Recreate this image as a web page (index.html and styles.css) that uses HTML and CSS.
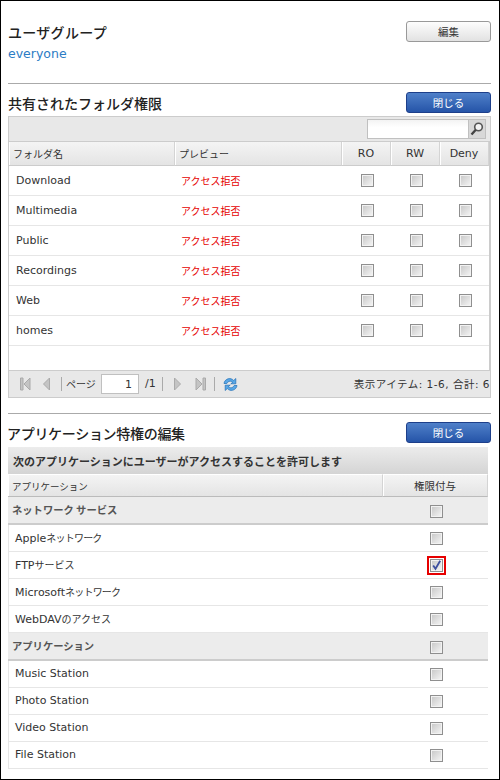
FILE: index.html
```html
<!DOCTYPE html>
<html>
<head>
    <meta charset="utf-8">
    <title>ユーザグループ</title>
    <link rel="stylesheet" href="styles.css">
</head>
<body>
    <div class="frame">
        <!-- ユーザグループ -->
        <div class="group-section">
            <div>
                <div class="section-title user-title">ユーザグループ</div>
                <div class="group-name">everyone</div>
            </div>
            <button class="btn">編集</button>
        </div>

        <!-- フォルダ権限 -->
        <div class="section-head">
            <div class="section-title">共有されたフォルダ権限</div>
            <button class="btn btn-blue">閉じる</button>
        </div>
        <div class="panel">
            <div class="toolbar">
                <div class="search">
                    <input type="text" class="search-input">
                    <span class="search-btn">
                        <svg width="16" height="16" viewBox="0 0 16 16"><circle cx="9.5" cy="6" r="3.8" fill="#f4f4f4" stroke="#555" stroke-width="1.6"/><path d="M6.8 8.8L2.5 13.5" stroke="#444" stroke-width="2.4"/></svg>
                    </span>
                </div>
            </div>
            <div class="table-body">
                <table class="folder-table">
                    <colgroup>
                        <col class="col-name"><col class="col-preview"><col class="col-check"><col class="col-check"><col class="col-check">
                    </colgroup>
                    <tr>
                        <th class="jp">フォルダ名</th>
                        <th class="jp">プレビュー</th>
                        <th class="center">RO</th>
                        <th class="center">RW</th>
                        <th class="center">Deny</th>
                    </tr>
                    <tr>
                        <td class="name">Download</td>
                        <td class="denied">アクセス拒否</td>
                        <td class="center"><span class="check"></span></td>
                        <td class="center"><span class="check"></span></td>
                        <td class="center"><span class="check"></span></td>
                    </tr>
                    <tr>
                        <td class="name">Multimedia</td>
                        <td class="denied">アクセス拒否</td>
                        <td class="center"><span class="check"></span></td>
                        <td class="center"><span class="check"></span></td>
                        <td class="center"><span class="check"></span></td>
                    </tr>
                    <tr>
                        <td class="name">Public</td>
                        <td class="denied">アクセス拒否</td>
                        <td class="center"><span class="check"></span></td>
                        <td class="center"><span class="check"></span></td>
                        <td class="center"><span class="check"></span></td>
                    </tr>
                    <tr>
                        <td class="name">Recordings</td>
                        <td class="denied">アクセス拒否</td>
                        <td class="center"><span class="check"></span></td>
                        <td class="center"><span class="check"></span></td>
                        <td class="center"><span class="check"></span></td>
                    </tr>
                    <tr>
                        <td class="name">Web</td>
                        <td class="denied">アクセス拒否</td>
                        <td class="center"><span class="check"></span></td>
                        <td class="center"><span class="check"></span></td>
                        <td class="center"><span class="check"></span></td>
                    </tr>
                    <tr>
                        <td class="name">homes</td>
                        <td class="denied">アクセス拒否</td>
                        <td class="center"><span class="check"></span></td>
                        <td class="center"><span class="check"></span></td>
                        <td class="center"><span class="check"></span></td>
                    </tr>
                </table>
            </div>
            <div class="pager">
                <svg class="pg-icon first" width="11" height="14" viewBox="0 0 11 14"><path d="M0.5 1h2.5v12H0.5z" fill="#c4c4c4" stroke="#aaa"/><path d="M10 1v12L4 7z" fill="#c4c4c4" stroke="#aaa"/></svg>
                <svg class="pg-icon prev" width="7" height="14" viewBox="0 0 7 14"><path d="M6.5 1v12L0.5 7z" fill="#c4c4c4" stroke="#aaa"/></svg>
                <span class="pg-sep"></span>
                <span class="pg-label">ページ</span>
                <input type="text" class="pg-input" value="1">
                <span class="pg-total">/1</span>
                <span class="pg-sep"></span>
                <svg class="pg-icon next" width="7" height="14" viewBox="0 0 7 14"><path d="M0.5 1v12L6.5 7z" fill="#c4c4c4" stroke="#aaa"/></svg>
                <svg class="pg-icon last" width="11" height="14" viewBox="0 0 11 14"><path d="M1 1v12L7 7z" fill="#c4c4c4" stroke="#aaa"/><path d="M8 1h2.5v12H8z" fill="#c4c4c4" stroke="#aaa"/></svg>
                <span class="pg-sep"></span>
                <svg class="pg-refresh" width="15" height="15" viewBox="0 0 15 15"><path d="M1 6.500C1.500 3 5 1 8 1.800c1.200.3 2 .9 2.700 1.700L12.800 1.500V6.800H7.800L9.700 5.300C8.300 3.700 5.300 3.700 3.800 6.500z" fill="#5aa8e6" stroke="#1f6db5" stroke-width=".7"/><path d="M14 8.500C13.500 12 10 14 7 13.200c-1.200-.3-2-.9-2.700-1.700L2.200 13.500V8.200H7.200L5.300 9.700C6.700 11.300 9.700 11.300 11.200 8.500z" fill="#5aa8e6" stroke="#1f6db5" stroke-width=".7"/></svg>
                <span class="pg-info">表示アイテム: 1-6, 合計: 6</span>
            </div>
        </div>

        <div class="divider"></div>

        <!-- アプリケーション特権 -->
        <div class="section-head app-head">
            <div class="section-title app-title">アプリケーション特権の編集</div>
            <button class="btn btn-blue">閉じる</button>
        </div>
        <table class="app-table">
            <colgroup>
                <col class="col-app"><col class="col-grant">
            </colgroup>
            <tr class="caption-row">
                <td colspan="2">次のアプリケーションにユーザーがアクセスすることを許可します</td>
            </tr>
            <tr>
                <th>アプリケーション</th>
                <th class="center">権限付与</th>
            </tr>
            <tr class="group-row">
                <td>ネットワーク サービス</td>
                <td class="center"><span class="check"></span></td>
            </tr>
            <tr>
                <td>Apple<span class="jp narrow">ネットワーク</span></td>
                <td class="center"><span class="check"></span></td>
            </tr>
            <tr>
                <td>FTP<span class="jp">サービス</span></td>
                <td class="center">
                    <span class="check-mark">
                        <span class="check">
                            <svg width="11" height="11" viewBox="0 0 11 11"><path d="M2.200 5.500L4.500 8.800L9.200 0.800" fill="none" stroke="#3d4f9f" stroke-width="1.800"/></svg>
                        </span>
                    </span>
                </td>
            </tr>
            <tr>
                <td>Microsoft<span class="jp narrow">ネットワーク</span></td>
                <td class="center"><span class="check"></span></td>
            </tr>
            <tr>
                <td>WebDAV<span class="jp">のアクセス</span></td>
                <td class="center"><span class="check"></span></td>
            </tr>
            <tr class="group-row">
                <td>アプリケーション</td>
                <td class="center"><span class="check"></span></td>
            </tr>
            <tr>
                <td>Music Station</td>
                <td class="center"><span class="check"></span></td>
            </tr>
            <tr>
                <td>Photo Station</td>
                <td class="center"><span class="check"></span></td>
            </tr>
            <tr>
                <td>Video Station</td>
                <td class="center"><span class="check"></span></td>
            </tr>
            <tr>
                <td>File Station</td>
                <td class="center"><span class="check"></span></td>
            </tr>
        </table>
    </div>
</body>
</html>
```

FILE: styles.css
```css
* {
    box-sizing: border-box;
}

body {
    margin: 0;
    background: white;
    font-family: "DejaVu Sans", "Noto Sans CJK JP", sans-serif;
    font-size: 11px;
    line-height: 16px;
    color: #333;
}

.frame {
    width: 500px;
    height: 780px;
    border: 1px solid black;
    padding: 0 8px 0 7px;
    overflow: hidden;
}

.jp {
    font-family: "Noto Sans CJK JP", sans-serif;
    font-size: 10px;
}

.narrow {
    letter-spacing: -0.8px;
}

.group-section {
    display: flex;
    justify-content: space-between;
    align-items: flex-start;
    width: 483px;
    height: 83px;
    padding-top: 20px;
    border-bottom: 1px solid #aaa;
}

.section-title {
    font-family: "Noto Sans CJK JP", sans-serif;
    font-size: 14px;
    font-weight: 500;
    line-height: 20px;
    color: #222;
}

.user-title {
    margin-top: 1px;
    letter-spacing: 0.3px;
}

.app-title {
    margin-left: -1px;
    letter-spacing: -0.3px;
}

.group-name {
    margin-top: 3px;
    font-size: 12.5px;
    line-height: 18px;
    color: #2b7cc4;
}

.btn {
    width: 85px;
    height: 21px;
    padding: 0;
    border: 1px solid #999;
    border-radius: 3px;
    background: linear-gradient(#fdfdfd, #e2e2e2);
    font-family: "Noto Sans CJK JP", sans-serif;
    font-size: 10.5px;
    color: #333;
}

.btn-blue {
    border-color: #1d3f8a;
    background: linear-gradient(#4f80c9, #2554a8);
    color: white;
}

.section-head {
    display: flex;
    justify-content: space-between;
    align-items: flex-start;
    width: 483px;
    height: 32px;
    padding-top: 8px;
}

.section-head .section-title {
    margin-top: 1px;
}

.panel {
    display: flex;
    flex-direction: column;
    width: 483px;
    height: 282px;
    border: 1px solid #ccc;
    background: #e8e8e8;
}

.toolbar {
    display: flex;
    justify-content: flex-end;
    height: 25px;
    padding: 2px 4px 0 0;
    border-bottom: 1px solid #ccc;
}

.search {
    display: flex;
    width: 119px;
    height: 20px;
    border: 1px solid #c0c0c0;
}

.search-input {
    flex: 1;
    min-width: 0;
    border: none;
    padding: 0;
    background: linear-gradient(#f3f3f3, white 40%);
}

.search-btn {
    display: flex;
    align-items: center;
    justify-content: center;
    width: 17px;
    background: #d8d8d8;
    border-left: 1px solid #c0c0c0;
}

.table-body {
    flex: none;
    height: 229px;
    background: white;
    border-bottom: 1px solid #ccc;
    border-right: 1px solid #ccc;
}

table {
    border-collapse: separate;
    border-spacing: 0;
    table-layout: fixed;
}

.folder-table {
    width: 480px;
}

.col-name {
    width: 166px;
}

.col-preview {
    width: 167px;
}

.col-check {
    width: 49px;
}

th {
    height: 24px;
    padding: 0 0 0 4px;
    background: linear-gradient(#f4f4f4, #e4e4e4);
    border-bottom: 1px solid #ccc;
    border-right: 1px solid #d4d4d4;
    box-shadow: inset 1px 0 0 white;
    font-size: 11px;
    font-weight: normal;
    text-align: left;
    color: #333;
}

th.center {
    padding-left: 0;
}

th.jp {
    font-size: 10px;
}

.center {
    text-align: center;
}

.folder-table td {
    height: 30px;
    border-bottom: 1px solid #e6e6e6;
    padding: 0;
}

.folder-table td.center {
    padding-left: 2px;
}

.folder-table .name {
    padding-left: 7px;
}

.folder-table .denied {
    padding-left: 6px;
    font-family: "Noto Sans CJK JP", sans-serif;
    font-size: 10px;
    color: #e60000;
}

.check {
    display: inline-block;
    width: 13px;
    height: 13px;
    border: 1px solid #8f8f8f;
    box-shadow: inset 0 0 0 1px #f2f2f2;
    background: linear-gradient(135deg, #c6c6c6, #f6f6f6);
    vertical-align: middle;
    line-height: 0;
}

.check-mark {
    display: inline-block;
    padding: 1px;
    border: 2px solid #e60000;
    line-height: 0;
}

.pager {
    display: flex;
    align-items: center;
    flex: 1;
    min-height: 0;
    padding: 0 0 0 11px;
    font-family: "Noto Sans CJK JP", sans-serif;
    font-size: 10px;
    color: #333;
}

.pg-icon.prev {
    margin-left: 12px;
    margin-right: 11px;
}

.pg-icon.next {
    margin-left: 11px;
    margin-right: 14px;
}

.pg-icon.last {
    margin-right: 8px;
}

.pg-sep {
    flex: none;
    width: 1px;
    height: 14px;
    background: #aaa;
}

.pg-label {
    flex: none;
    width: 30px;
    margin-left: 4px;
    white-space: nowrap;
}

.pg-input {
    width: 38px;
    height: 20px;
    margin-left: 5px;
    padding: 0 6px;
    border: 1px solid #c0c0c0;
    background: white;
    text-align: right;
    font-family: "DejaVu Sans", sans-serif;
    font-size: 11px;
    color: #333;
}

.pg-total {
    flex: none;
    width: 12px;
    margin: 0 5px 0 6px;
    font-family: "DejaVu Sans", sans-serif;
    font-size: 11px;
}

.pg-refresh {
    margin-left: 8px;
}

.pg-info {
    margin-left: auto;
    font-family: "DejaVu Sans", "Noto Sans CJK JP", sans-serif;
    font-size: 10.5px;
    letter-spacing: 0.5px;
    white-space: nowrap;
}

.divider {
    width: 483px;
    height: 1px;
    margin-top: 15px;
    background: #aaa;
}

.app-head {
    height: 33px;
}

.app-table {
    width: 480px;
}

.col-grant {
    width: 105px;
}

.caption-row td {
    height: 24px;
    background: linear-gradient(#ececec, #d4d4d4);
    font-family: "Noto Sans CJK JP", sans-serif;
    font-weight: 700;
    font-size: 11px;
    color: #333;
}

.app-table th {
    height: 23px;
    border-top: 1px solid white;
    padding-left: 4px;
    border-bottom: 1px solid #bbb;
    font-family: "Noto Sans CJK JP", sans-serif;
    font-size: 9.5px;
}

.app-table th.center {
    padding-left: 0;
    font-size: 10.5px;
}

.app-table td {
    height: 27px;
    border-bottom: 1px solid #e6e6e6;
    padding: 0;
}

.app-table td.center {
    padding-left: 2px;
}

.app-table tr td:first-child {
    padding-left: 6px;
    border-left: 1px solid #e6e6e6;
}

.app-table .group-row td {
    height: 28px;
    background: #ececec;
    border-bottom: 2px solid #ccc;
    font-family: "Noto Sans CJK JP", sans-serif;
    font-size: 10.3px;
    font-weight: 700;
    color: #555;
}

.app-table .group-row td:first-child {
    padding-left: 4px;
    border-left: none;
}

.app-table .caption-row td:first-child {
    padding-left: 5px;
    border-left: none;
    border-bottom: none;
}
```
